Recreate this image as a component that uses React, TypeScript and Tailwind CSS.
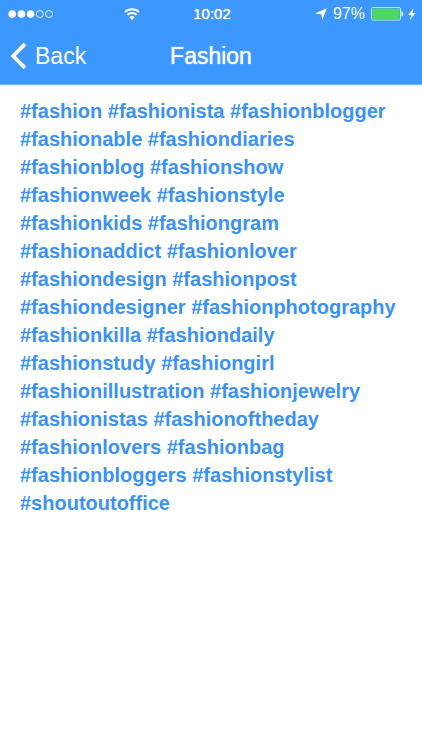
const tags = [
  "#fashion",
  "#fashionista",
  "#fashionblogger",
  "#fashionable",
  "#fashiondiaries",
  "#fashionblog",
  "#fashionshow",
  "#fashionweek",
  "#fashionstyle",
  "#fashionkids",
  "#fashiongram",
  "#fashionaddict",
  "#fashionlover",
  "#fashiondesign",
  "#fashionpost",
  "#fashiondesigner",
  "#fashionphotography",
  "#fashionkilla",
  "#fashiondaily",
  "#fashionstudy",
  "#fashiongirl",
  "#fashionillustration",
  "#fashionjewelry",
  "#fashionistas",
  "#fashionoftheday",
  "#fashionlovers",
  "#fashionbag",
  "#fashionbloggers",
  "#fashionstylist",
  "#shoutoutoffice",
];

function Signal() {
  return (
    <svg width="46" height="10" viewBox="0 0 46 10" fill="white">
      <circle cx="4.2" cy="5" r="3.8" />
      <circle cx="13.4" cy="5" r="3.8" />
      <circle cx="22.6" cy="5" r="3.8" />
      <g fill="none" stroke="white" strokeWidth="0.8">
        <circle cx="31.8" cy="5" r="3.5" />
        <circle cx="41" cy="5" r="3.5" />
      </g>
    </svg>
  );
}

function Wifi() {
  return (
    <svg width="16" height="12" viewBox="0 0 16 12" fill="none" stroke="white">
      <path d="M0.8 4.2a10.2 10.2 0 0 1 14.4 0" strokeWidth="1.9" />
      <path d="M3.3 6.9a6.6 6.6 0 0 1 9.4 0" strokeWidth="1.9" />
      <path d="M8 12 5.3 9.2a3.9 3.9 0 0 1 5.4 0z" fill="white" stroke="none" />
    </svg>
  );
}

function Battery() {
  return (
    <svg width="33" height="14" viewBox="0 0 33 14">
      <rect
        x="0.5"
        y="0.5"
        width="29"
        height="12.6"
        rx="1.5"
        fill="none"
        stroke="#b5e3f5"
      />
      <rect x="1.4" y="1.4" width="27.2" height="10.8" rx="0.6" fill="#4bd862" />
      <path d="M30.4 4.2c2.6.2 2.6 5 0 5.2z" fill="white" />
    </svg>
  );
}

function StatusBar() {
  return (
    <div className="grid h-7 grid-cols-3 items-center pl-2 pr-1.5">
      <div className="flex items-center justify-between pr-1">
        <Signal />
        <Wifi />
      </div>
      <p className="text-center text-[15px] leading-5 [text-shadow:0_0_1px_white]">
        10:02
      </p>
      <div className="flex items-center justify-end">
        <svg width="12" height="12" viewBox="0 0 12 12" fill="white">
          <path d="M12 0 7.2 12 6.4 6.3 0 5.6z" />
        </svg>
        <span className="mx-1.5 text-base leading-5">97%</span>
        <Battery />
        <svg
          className="ml-1"
          width="8"
          height="12"
          viewBox="0 0 8 12"
          fill="white"
        >
          <path d="M5.6 0 0.2 6.9h3L1.8 12 7.6 4.9H4.4z" />
        </svg>
      </div>
    </div>
  );
}

function NavBar() {
  return (
    <div className="grid h-14 grid-cols-3 items-center px-2.5">
      <button className="flex items-center gap-2 text-[23px] leading-7">
        <svg
          width="17"
          height="28"
          viewBox="0 0 17 28"
          fill="none"
          stroke="white"
          strokeWidth="3.8"
        >
          <path d="M15 2.2 3.2 14 15 25.8" />
        </svg>
        Back
      </button>
      <h1 className="text-center text-[23px] leading-7 [text-shadow:0_0_1px_white]">
        Fashion
      </h1>
    </div>
  );
}

export default function App() {
  return (
    <div className="min-h-screen bg-white font-['Liberation_Sans',Arial,sans-serif]">
      <header className="border-b border-b-[#78b3f5] bg-[#3c97fe] text-white">
        <StatusBar />
        <NavBar />
      </header>
      <main className="px-5 py-3">
        <p className="text-xl leading-7 font-bold text-[#3b92f2]">
          {tags.join(" ")}
        </p>
      </main>
    </div>
  );
}
